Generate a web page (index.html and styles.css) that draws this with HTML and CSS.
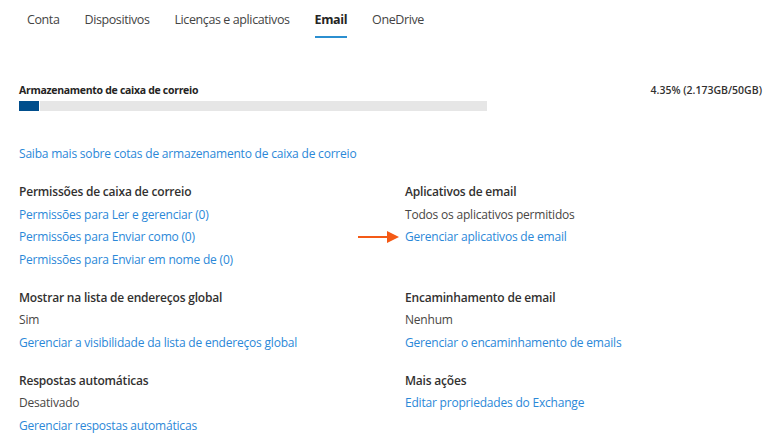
FILE: index.html
```html
<!DOCTYPE html>
<html lang="pt-BR">
<head>
<meta charset="utf-8">
<title>Email</title>
<link rel="stylesheet" href="styles.css">
</head>
<body>
<div class="page">
  <nav class="tabs">
    <span class="tab">Conta</span>
    <span class="tab">Dispositivos</span>
    <span class="tab">Licenças e aplicativos</span>
    <span class="tab active">Email</span>
    <span class="tab">OneDrive</span>
  </nav>

  <section class="storage">
    <div class="storage-head">
      <span class="storage-title">Armazenamento de caixa de correio</span>
      <span class="storage-value">4.35% (2.173GB/50GB)</span>
    </div>
    <div class="bar"><div class="bar-fill"></div><div class="bar-rest"></div></div>
    <a class="link learn" href="#">Saiba mais sobre cotas de armazenamento de caixa de correio</a>
  </section>

  <div class="grid">
    <div class="block">
      <div class="head">Permissões de caixa de correio</div>
      <a class="link" href="#">Permissões para Ler e gerenciar (0)</a>
      <a class="link" href="#">Permissões para Enviar como (0)</a>
      <a class="link" href="#">Permissões para Enviar em nome de (0)</a>
    </div>
    <div class="block">
      <div class="head">Aplicativos de email</div>
      <div class="text">Todos os aplicativos permitidos</div>
      <div class="pointed">
        <svg class="arrow" width="42" height="14" viewBox="0 0 42 14" aria-hidden="true">
          <line x1="0" y1="7" x2="31" y2="7" stroke="#f45a16" stroke-width="2"/>
          <polygon points="29,1 41,7 29,13" fill="#f45a16"/>
        </svg>
        <a class="link" href="#">Gerenciar aplicativos de email</a>
      </div>
    </div>
    <div class="block">
      <div class="head">Mostrar na lista de endereços global</div>
      <div class="text">Sim</div>
      <a class="link" href="#">Gerenciar a visibilidade da lista de endereços global</a>
    </div>
    <div class="block">
      <div class="head">Encaminhamento de email</div>
      <div class="text">Nenhum</div>
      <a class="link" href="#">Gerenciar o encaminhamento de emails</a>
    </div>
    <div class="block">
      <div class="head">Respostas automáticas</div>
      <div class="text">Desativado</div>
      <a class="link" href="#">Gerenciar respostas automáticas</a>
    </div>
    <div class="block">
      <div class="head">Mais ações</div>
      <a class="link" href="#">Editar propriedades do Exchange</a>
    </div>
  </div>
</div>
</body>
</html>
```

FILE: styles.css
```css
* { box-sizing: border-box; }
html, body { margin: 0; background: #ffffff; }
body {
  font-family: "Open Sans", "Noto Sans", "Liberation Sans", sans-serif;
  font-size: 12px;
  letter-spacing: -0.2px;
  color: #323130;
}
.page { padding: 0 15px 0 19px; }

.tabs {
  display: flex;
  gap: 25px;
  padding-left: 8px;
  padding-top: 10px;
}
.tab {
  font-size: 12.5px;
  letter-spacing: -0.4px;
  line-height: 20px;
  padding-bottom: 6px;
  border-bottom: 2px solid transparent;
  color: #444444;
}
.tab.active {
  font-weight: 700;
  color: #252423;
  border-bottom-color: #2b8fd0;
}

.storage { margin-top: 44px; }
.storage-head {
  display: flex;
  justify-content: space-between;
  font-size: 10.5px;
  line-height: 16px;
}
.storage-title { font-weight: 700; color: #252423; letter-spacing: -0.3px; }
.storage-value { font-weight: 600; color: #323130; letter-spacing: 0; }
.bar {
  display: flex;
  gap: 1px;
  width: 468px;
  height: 10px;
  margin-top: 3px;
}
.bar-fill { width: 20px; background: #004e8c; }
.bar-rest { flex: 1; background: #e6e6e6; }
.learn { margin-top: 32px; }

.link {
  display: block;
  color: #2b88d8;
  text-decoration: none;
  line-height: 22.5px;
}
.text { line-height: 22.5px; color: #484644; }
.head { line-height: 22.5px; font-weight: 600; color: #323130; }

.grid {
  display: grid;
  grid-template-columns: 386px 1fr;
  row-gap: 15.5px;
  margin-top: 15.5px;
}
.pointed { position: relative; }
.arrow {
  position: absolute;
  left: -47px;
  top: 4px;
}
```
